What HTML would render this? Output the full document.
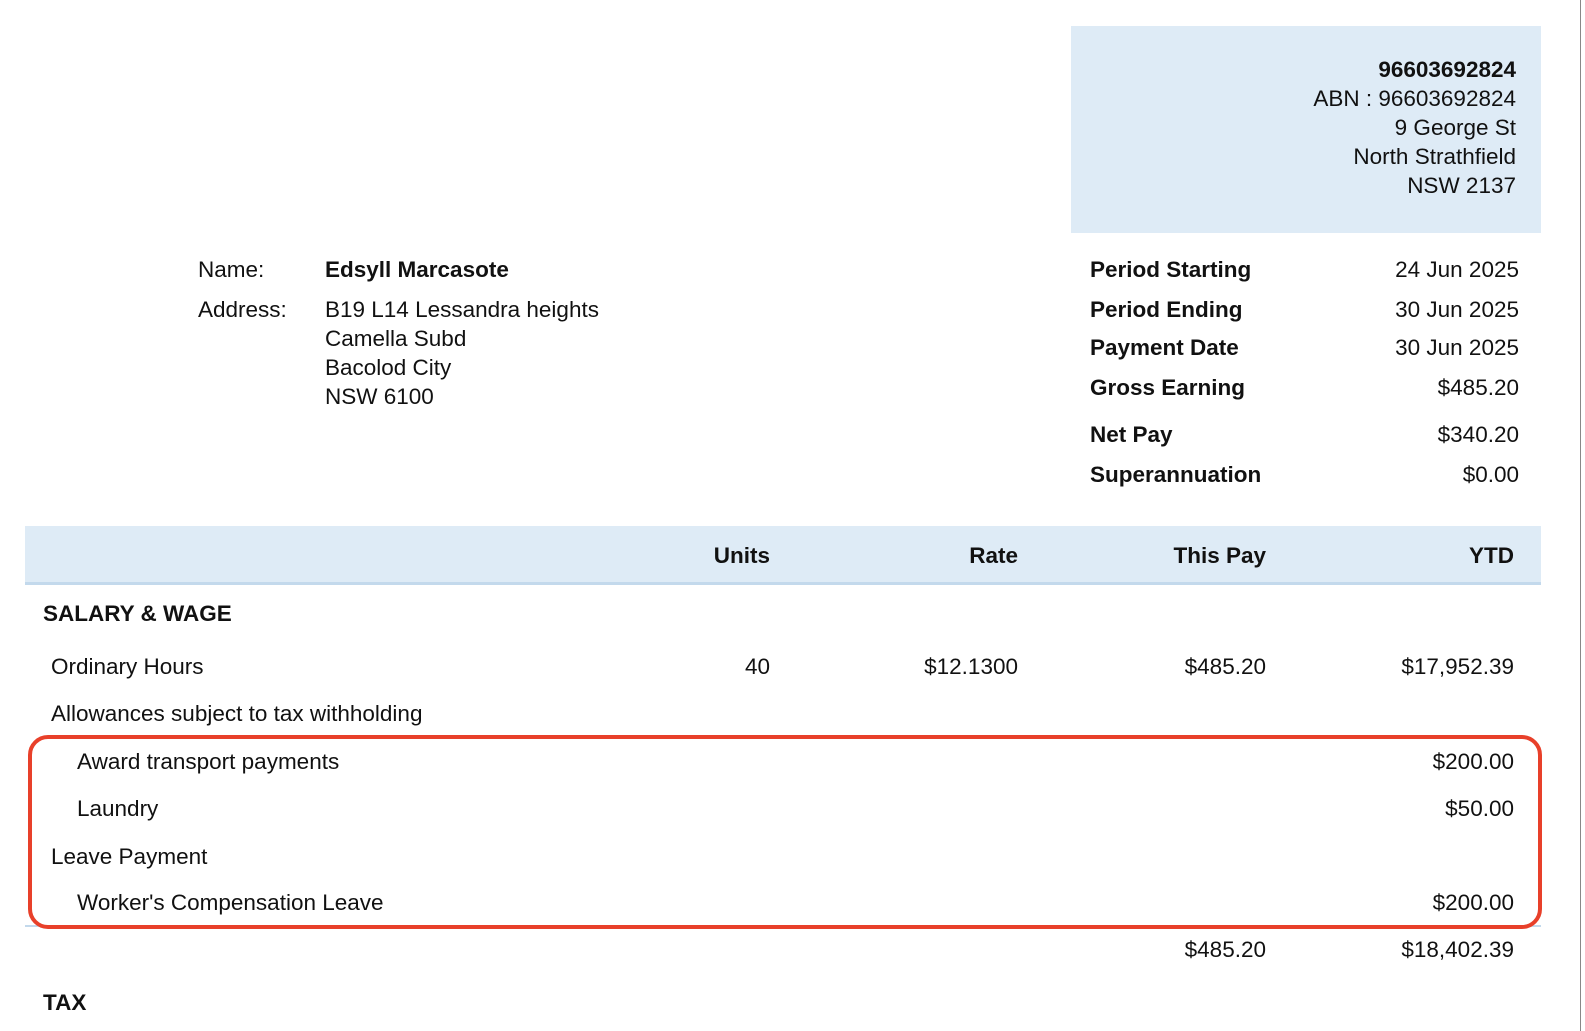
<!DOCTYPE html>
<html><head><meta charset="utf-8"><style>
body{margin:0;width:1585px;height:1031px;background:#fff;position:relative;overflow:hidden;font-family:"Liberation Sans",Arial,sans-serif;font-size:22.5px;color:#111}
.t{position:absolute;white-space:nowrap;line-height:26px}
.r{text-align:right}
.b{font-weight:bold}
</style></head><body>
<div style="position:absolute;left:1071px;top:26px;width:470px;height:207px;background:#deebf6"></div>
<div class="t r b" style="right:69px;top:57px">96603692824</div>
<div class="t r" style="right:69px;top:86px">ABN : 96603692824</div>
<div class="t r" style="right:69px;top:115px">9 George St</div>
<div class="t r" style="right:69px;top:144px">North Strathfield</div>
<div class="t r" style="right:69px;top:173px">NSW 2137</div>

<div class="t" style="left:198px;top:257px">Name:</div>
<div class="t b" style="left:325px;top:257px">Edsyll Marcasote</div>
<div class="t" style="left:198px;top:297px">Address:</div>
<div class="t" style="left:325px;top:297px">B19 L14 Lessandra heights</div>
<div class="t" style="left:325px;top:326px">Camella Subd</div>
<div class="t" style="left:325px;top:355px">Bacolod City</div>
<div class="t" style="left:325px;top:384px">NSW 6100</div>

<div class="t b" style="left:1090px;top:257px">Period Starting</div><div class="t r" style="right:66px;top:257px">24 Jun 2025</div>
<div class="t b" style="left:1090px;top:297px">Period Ending</div><div class="t r" style="right:66px;top:297px">30 Jun 2025</div>
<div class="t b" style="left:1090px;top:335px">Payment Date</div><div class="t r" style="right:66px;top:335px">30 Jun 2025</div>
<div class="t b" style="left:1090px;top:375px">Gross Earning</div><div class="t r" style="right:66px;top:375px">$485.20</div>
<div class="t b" style="left:1090px;top:422px">Net Pay</div><div class="t r" style="right:66px;top:422px">$340.20</div>
<div class="t b" style="left:1090px;top:462px">Superannuation</div><div class="t r" style="right:66px;top:462px">$0.00</div>

<div style="position:absolute;left:25px;top:526px;width:1516px;height:56px;background:#deebf6;border-bottom:3px solid #c3d9ec"></div>
<div class="t r b" style="right:815px;top:543px">Units</div>
<div class="t r b" style="right:567px;top:543px">Rate</div>
<div class="t r b" style="right:319px;top:543px">This Pay</div>
<div class="t r b" style="right:71px;top:543px">YTD</div>

<div class="t b" style="left:43px;top:601px">SALARY &amp; WAGE</div>
<div class="t" style="left:51px;top:654px">Ordinary Hours</div>
<div class="t r" style="right:815px;top:654px">40</div>
<div class="t r" style="right:567px;top:654px">$12.1300</div>
<div class="t r" style="right:319px;top:654px">$485.20</div>
<div class="t r" style="right:71px;top:654px">$17,952.39</div>
<div class="t" style="left:51px;top:701px">Allowances subject to tax withholding</div>
<div class="t" style="left:77px;top:749px">Award transport payments</div><div class="t r" style="right:71px;top:749px">$200.00</div>
<div class="t" style="left:77px;top:796px">Laundry</div><div class="t r" style="right:71px;top:796px">$50.00</div>
<div class="t" style="left:51px;top:844px">Leave Payment</div>
<div class="t" style="left:77px;top:890px">Worker's Compensation Leave</div><div class="t r" style="right:71px;top:890px">$200.00</div>
<div style="position:absolute;left:25px;top:925px;width:1516px;height:2px;background:#c3d9ec"></div>
<div style="position:absolute;left:28px;top:735px;width:1506px;height:186px;border:4px solid #e8402a;border-radius:20px"></div>
<div class="t r" style="right:319px;top:937px">$485.20</div>
<div class="t r" style="right:71px;top:937px">$18,402.39</div>
<div class="t b" style="left:43px;top:990px">TAX</div>
<div style="position:absolute;left:1580px;top:0;width:1px;height:1031px;background:#888"></div>
</body></html>
